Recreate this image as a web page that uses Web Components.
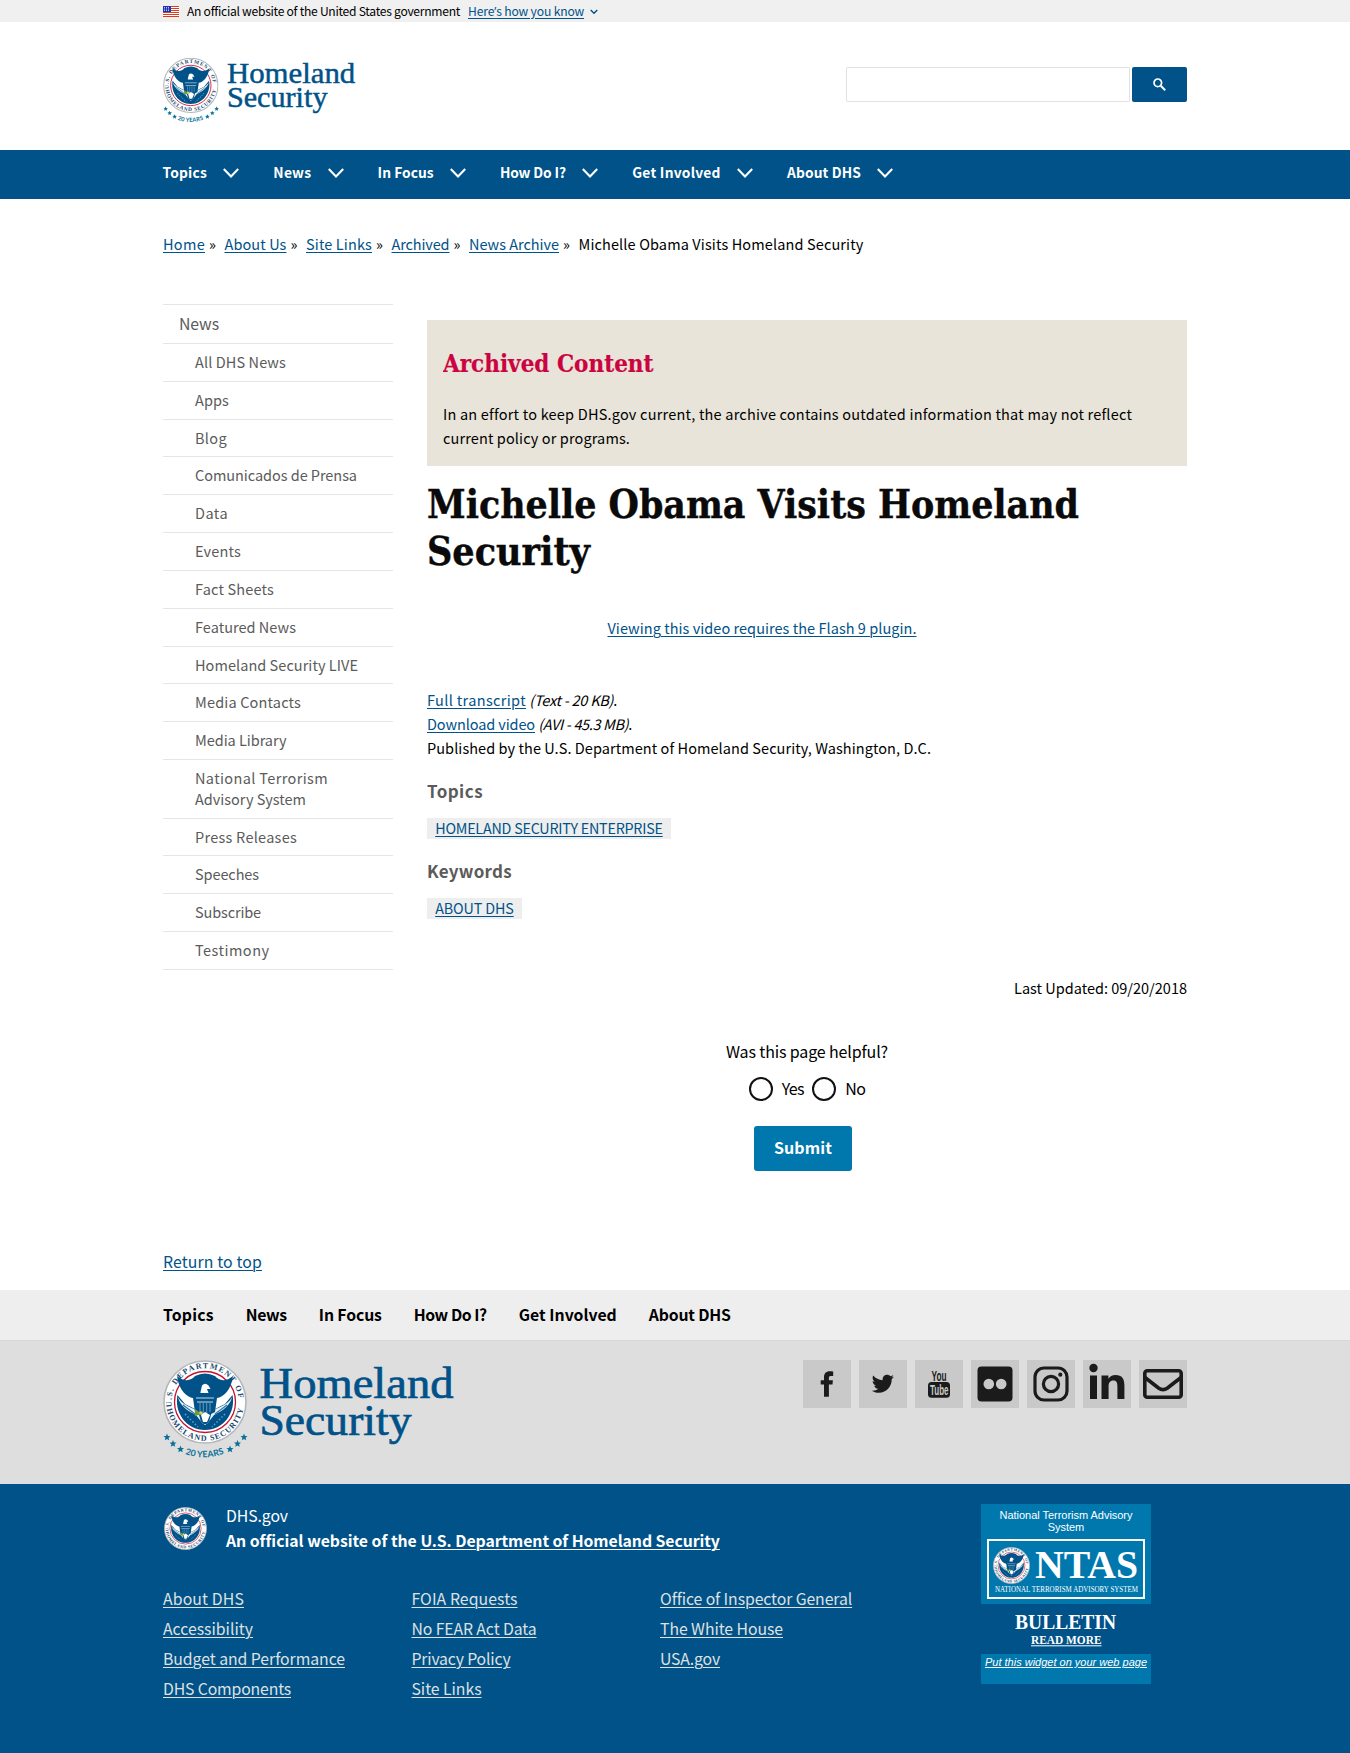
<!DOCTYPE html>
<html lang="en">
<head>
<meta charset="utf-8">
<title>Michelle Obama Visits Homeland Security | Homeland Security</title>
<style>
html,body{margin:0;padding:0;background:#fff}
body{font-family:"Noto Sans CJK SC","Open Sans",sans-serif;font-size:14.5px;line-height:24px;color:#000}
</style>
</head>
<body>
<dhs-page></dhs-page>
<script>
const define = (name, html, extra) => {
  const t = document.createElement('template');
  t.innerHTML = '<style>*{box-sizing:border-box}a{color:#005288;text-decoration:underline;text-underline-offset:2px;text-decoration-thickness:1px}svg{display:block}</style>' + html;
  customElements.define(name, class extends HTMLElement {
    connectedCallback() {
      if (this.shadowRoot) return;
      this.attachShadow({mode: 'open'}).appendChild(t.content.cloneNode(true));
      if (extra) extra.call(this, this.shadowRoot);
    }
  });
};

/* Inline run of text, tracked so that it fills the measure given in "w". */
customElements.define('text-run', class extends HTMLElement {
  connectedCallback() {
    if (this.shadowRoot) return;
    this.attachShadow({mode: 'open'}).innerHTML = '<style>:host{display:inline;white-space:nowrap}</style><slot></slot>';
    const w = parseFloat(this.getAttribute('w'));
    const now = this.getBoundingClientRect().width;
    if (w && now) this.style.letterSpacing = ((w - now) / this.textContent.length).toFixed(3) + 'px';
  }
});

define('dhs-seal', `
<style>:host{display:block}svg{width:100%;height:100%;overflow:visible}</style>
<svg viewBox="-42 -42 84 84">
 <defs>
  <path id="top" d="M-33.2 5 A33.6 33.6 0 1 1 33.2 5"/>
  <path id="bot" d="M-38.6 4 A38.8 38.8 0 0 0 38.6 4"/>
 </defs>
 <circle r="41" fill="#fff" stroke="#b4b7ba" stroke-width="1.6"/>
 <circle r="30.5" fill="#fff" stroke="#c41230" stroke-width="1.3"/>
 <path d="M-27.5 -7 C-31 10 -19 28 0 28 C19 28 31 10 27.5 -7 L20 2 L0 12 L-20 2Z" fill="#005288"/>
 <path d="M-27 -5 C-23 3 -14 5 -7 9 L-4 20 L0 23 L4 20 L7 9 C14 5 23 3 27 -5 C26 2 18 9 9 13 L2 22 H-2 L-9 13 C-18 9 -26 2 -27 -5Z" fill="#e9f1f6"/>
 <path d="M-22 3 L-10 12 M22 3 L10 12" stroke="#2e7aa8" stroke-width="1.2"/>
 <path d="M-28 -26 C-21 -20 -14 -21 -10 -26 Q0 -31 10 -26 C14 -21 21 -20 28 -26 C26 -11 18 -5 12 -4 L10 10 L0 15 L-10 10 L-12 -4 C-18 -5 -26 -11 -28 -26Z" fill="#005288"/>
 <path d="M-4.500 -10 L-3 -16.500 Q0 -20 3.500 -16.500 L5.500 -13 L2 -13 L3.500 -9 H-4.500Z" fill="#fff"/>
 <path d="M-9 -4 H9 M-8 0 H8" stroke="#dbe8f0" stroke-width=".9"/>
 <path d="M-5 1 V10 M-1.7 1 V12 M1.7 1 V12 M5 1 V10" stroke="#7fabc8" stroke-width=".8"/>
 <path d="M-10 7 L-3 12 L-10 14Z" fill="#6f9d3c"/><circle cx="-4" cy="11" r="1.8" fill="#d8cf62"/>
 <path d="M-4 13 L0 10 L5 13 L2 20 H-2Z" fill="#fff"/>
 <path d="M-20 12 L-7 25 M20 12 L7 25" stroke="#58a1c7" stroke-width="1.6" stroke-dasharray="1.5 2"/>
 <g font-family="Liberation Serif,serif" font-weight="bold" font-size="8" fill="#20496f">
  <text><textPath href="#top" textLength="107">U.S. DEPARTMENT OF</textPath></text>
  <text><textPath href="#bot" startOffset="3" textLength="108">HOMELAND SECURITY</textPath></text>
 </g>
</svg>`);

define('dhs-logo', `
<style>:host{display:block;width:292px;height:102px}svg{width:100%;height:100%;overflow:visible}</style>
<svg viewBox="0 0 292 102">
 <foreignObject x="0" y="1" width="84" height="84"><dhs-seal style="width:84px;height:84px"></dhs-seal></foreignObject>
 <g fill="#0a7198"><path id="s" d="M4 74.6l1 2.3 2.5.2-1.9 1.6.6 2.5L4 79.9l-2.2 1.3.6-2.5L.5 77.1l2.5-.2z"/>
 <use href="#s" x="6" y="6.5"/><use href="#s" x="13.5" y="12"/><use href="#s" x="63" y="12"/><use href="#s" x="70.5" y="6.5"/><use href="#s" x="77" y="0"/></g>
 <path id="yr" d="M21 94.5 Q41.5 102.5 64 93.5" fill="none"/>
 <text font-family="Lato,sans-serif" font-weight="bold" font-size="8.8" fill="#0a7198"><textPath href="#yr" startOffset="1" textLength="40">20 YEARS</textPath></text>
 <g font-family="Liberation Serif,serif" font-size="44" fill="#005288" stroke="#005288" stroke-width=".7">
  <text x="96.5" y="38.8" textLength="194" lengthAdjust="spacingAndGlyphs">Homeland</text>
  <text x="96.5" y="75.500" textLength="152" lengthAdjust="spacingAndGlyphs">Security</text>
 </g>
</svg>`);

define('gov-banner', `
<style>:host{display:flex;align-items:center;height:22px;background:#f0f0f0;padding-left:163px;font-size:12.1px;line-height:22px}
.flag{margin-right:8px}.a{margin-right:8px}.c{margin:1px 0 0 6px}</style>
<svg class="flag" width="16" height="11" viewBox="0 0 16 11"><rect width="16" height="11" fill="#fff"/><path d="M0 .5H16M0 2.5H16M0 4.5H16M0 6.5H16M0 8.5H16M0 10.5H16" stroke="#db3e1f"/><rect width="8" height="6" fill="#1e33b1"/><path d="M1 1.5h6M1 3h6M1 4.5h6" stroke="#fff" stroke-width=".7" stroke-dasharray="1 1"/></svg>
<span class="a"><text-run w="273">An official website of the United States government</text-run></span>
<a href="#"><text-run w="116">Here<span style="font-family:'Open Sans',sans-serif">’</span>s how you know</text-run></a>
<svg class="c" width="8" height="6" viewBox="0 0 8 6"><path d="M.7 1L4 4.3 7.3 1" fill="none" stroke="#005288" stroke-width="1.4"/></svg>`);

define('site-header', `
<style>:host{display:flex;justify-content:space-between;height:128px;padding:35px 163px 0}
dhs-logo{width:193.3px;height:67.5px}.s{display:flex;gap:2px;margin-top:10px;height:35px}
.i{width:284px;border:1px solid #e2e2e2;border-radius:1px}.b{width:55px;background:#005288;border-radius:2px;display:flex;align-items:center;justify-content:center}</style>
<dhs-logo></dhs-logo>
<div class="s"><div class="i"></div><div class="b"><svg width="13" height="13" viewBox="0 0 13 13" fill="none" stroke="#fff"><circle cx="4.8" cy="4.8" r="3.8" stroke-width="1.7"/><path d="M7.7 7.7L12.2 12.2" stroke-width="2"/></svg></div></div>`);

define('nav-item', `
<style>:host{display:flex;align-items:center}svg{margin:2px 0 0 16.300px}</style>
<slot></slot><svg width="16" height="10" viewBox="0 0 16 10"><path d="M.8 1L8 8.5 15.2 1" fill="none" stroke="#fff" stroke-width="2.1"/></svg>`);

define('main-nav', `
<style>:host{display:flex;gap:34px;height:49px;background:#005288;color:#fff;font-weight:bold;font-size:13.8px;padding:0 162.5px 5px}</style>
<nav-item><text-run w="44.5">Topics</text-run></nav-item><nav-item><text-run w="38">News</text-run></nav-item><nav-item><text-run w="56">In Focus</text-run></nav-item><nav-item><text-run w="66">How Do I?</text-run></nav-item><nav-item><text-run w="88.5">Get Involved</text-run></nav-item><nav-item><text-run w="74">About DHS</text-run></nav-item>`);

define('bread-crumbs', `
<style>:host{display:flex;height:24px;gap:8.5px}span{display:flex;gap:4px}</style>
<span><a href="#"><text-run w="42">Home</text-run></a><text-run w="7">»</text-run></span><span><a href="#"><text-run w="62">About Us</text-run></a><text-run w="7">»</text-run></span><span><a href="#"><text-run w="66">Site Links</text-run></a><text-run w="7">»</text-run></span><span><a href="#"><text-run w="58">Archived</text-run></a><text-run w="7">»</text-run></span><span><a href="#"><text-run w="90">News Archive</text-run></a><text-run w="7">»</text-run></span><text-run w="285">Michelle Obama Visits Homeland Security</text-run>`);

define('side-nav', `
<style>:host{display:block;width:230px;border-top:1px solid #e6e6e6;color:#5b5b5b;line-height:20.8px}
div{border-bottom:1px solid #e6e6e6;padding:8px 0 8.03px 32px}.t{padding:8px 16px;line-height:22px;font-size:15.8px}</style>
<div class="t"><text-run w="40">News</text-run></div>`,
function (root) {
  [['All DHS News|91'],['Apps|34'],['Blog|32'],['Comunicados de Prensa|162'],['Data|33'],['Events|46'],['Fact Sheets|79'],['Featured News|101'],['Homeland Security LIVE|163'],['Media Contacts|106'],['Media Library|91.5'],['National Terrorism|133','Advisory System|111'],['Press Releases|102'],['Speeches|64'],['Subscribe|66'],['Testimony|74.5']].forEach(lines => {
    const d = document.createElement('div');
    d.innerHTML = lines.map(l => { const [t, w] = l.split('|'); return `<text-run w="${w}">${t}</text-run>`; }).join('<br>');
    root.appendChild(d);
  });
});

define('archive-notice', `
<style>:host{display:block;background:#e9e4d9;padding:0 16px;height:145.5px;padding-top:16px}h2{margin:0;height:66px}</style>
<h2><svg width="728" height="66"><text x="0" y="36" textLength="210.5" lengthAdjust="spacingAndGlyphs" font-family="DejaVu Serif Condensed,DejaVu Serif,serif" font-weight="bold" font-size="24.2" fill="#cb0340" stroke="#cb0340" stroke-width=".2">Archived Content</text></svg></h2>
<text-run w="689">In an effort to keep DHS.gov current, the archive contains outdated information that may not reflect</text-run><br><text-run w="187">current policy or programs.</text-run>`);

define('tag-group', `
<style>:host{display:flex;flex-direction:column;align-items:flex-start;margin-top:19px}h3{margin:0 0 14.5px;font-size:17px;line-height:24px;color:#5b5b5b}
div{display:flex;background:#eee;height:21.5px;line-height:20.5px;padding:0 8.2px;font-size:14.3px}</style>
<h3><slot name="h"></slot></h3><div><a href="#"><slot></slot></a></div>`);

define('page-feedback', `
<style>:host{display:flex;flex-direction:column;align-items:center;font-size:16px;margin-top:39px}
.r{display:flex;align-items:center;margin-top:14px;height:24px;line-height:22px}.r text-run{margin-top:-2px}i{width:24px;height:24px;border:2px solid #111;border-radius:50%;margin-right:9px}i+text-run+i{margin-left:8.5px}
.b{width:98px;height:45px;background:#0078ae;color:#fff;border-radius:3px;font-weight:bold;text-align:center;line-height:43px;margin:25px 8px 0 0}</style>
<text-run w="162">Was this page helpful?</text-run>
<div class="r"><i></i><text-run w="22">Yes</text-run><i></i><text-run w="20">No</text-run></div>
<div class="b"><text-run w="58">Submit</text-run></div>`);

define('article-body', `
<style>:host{display:block;width:760px;padding-top:16px}h1{margin:0;height:130px}.v{width:670px;text-align:center;margin-top:20.5px}.d{margin-top:48px}.u{text-align:right;margin-top:56.500px}tag-group+tag-group{margin-top:20px}</style>
<archive-notice></archive-notice>
<h1><svg width="760" height="130" font-family="DejaVu Serif Condensed,DejaVu Serif,serif" font-weight="bold" font-size="40" fill="#0a0a0a" stroke="#0a0a0a" stroke-width=".4"><text x="0" y="52" textLength="652" lengthAdjust="spacingAndGlyphs">Michelle Obama Visits Homeland</text><text x="0" y="98.7" textLength="163" lengthAdjust="spacingAndGlyphs">Security</text></svg></h1>
<div class="v"><a href="#"><text-run w="309">Viewing this video requires the Flash 9 plugin.</text-run></a></div>
<div class="d"><a href="#"><text-run w="99">Full transcript</text-run></a> <i><text-run w="84">(Text - 20 KB)</text-run></i>.<br><a href="#"><text-run w="108">Download video</text-run></a> <i><text-run w="90">(AVI - 45.3 MB)</text-run></i>.<br><text-run w="504">Published by the U.S. Department of Homeland Security, Washington, D.C.</text-run></div>
<tag-group><text-run slot="h" w="56">Topics</text-run><text-run w="227.5">HOMELAND SECURITY ENTERPRISE</text-run></tag-group>
<tag-group><text-run slot="h" w="85">Keywords</text-run><text-run w="78.5">ABOUT DHS</text-run></tag-group>
<div class="u"><text-run w="173">Last Updated: 09/20/2018</text-run></div>
<page-feedback></page-feedback>`);

define('footer-nav', `
<style>:host{display:flex;gap:32px;height:50px;background:#eee;padding:0 163px;align-items:center;font-weight:bold;font-size:15.8px}</style>
<text-run w="50.800">Topics</text-run><text-run w="41">News</text-run><text-run w="63">In Focus</text-run><text-run w="73">How Do I?</text-run><text-run w="98">Get Involved</text-run><text-run w="82">About DHS</text-run>`);

define('social-links', `
<style>:host{display:flex;gap:8px;height:48px}svg{width:48px;height:48px;background:#c9c9c9}</style>
<svg viewBox="0 0 48 48"><path fill="#1b1b1b" d="M30.2 11.5v4.4h-2.400c-1.600 0-1.900.8-1.900 1.900v2.400h4l-.4 4.400h-3.600v12.100h-4.900V24.600h-3.300v-4.400H21v-3c0-3.600 2-5.900 5.800-5.900 1.700 0 3 .1 3.400.2z"/></svg>
<svg viewBox="0 0 48 48"><path fill="#1b1b1b" transform="translate(12.7 12.6) scale(.0435)" d="M459.370 151.716c.325 4.548.325 9.097.325 13.645 0 138.720-105.583 298.558-298.558 298.558-59.452 0-114.680-17.219-161.137-47.106 8.447.974 16.568 1.299 25.340 1.299 49.055 0 94.213-16.568 130.274-44.832-46.132-.975-84.792-31.188-98.112-72.772 6.498.974 12.995 1.624 19.818 1.624 9.421 0 18.843-1.300 27.614-3.573-48.081-9.747-84.143-51.980-84.143-102.985v-1.299c13.969 7.797 30.214 12.670 47.431 13.319-28.264-18.843-46.781-51.005-46.781-87.391 0-19.492 5.197-37.360 14.294-52.954 51.655 63.675 129.300 105.258 216.365 109.807-1.624-7.797-2.599-15.918-2.599-24.040 0-57.828 46.782-104.934 104.934-104.934 30.213 0 57.502 12.670 76.670 33.137 23.715-4.548 46.456-13.320 66.599-25.340-7.798 24.366-24.366 44.833-46.132 57.827 21.117-2.273 41.584-8.122 60.426-16.243-14.292 20.791-32.161 39.308-52.628 54.253z"/></svg>
<svg viewBox="0 0 48 48" font-family="Liberation Sans Narrow,Liberation Sans,sans-serif" font-weight="bold"><text x="16.5" y="20.5" font-size="14" textLength="15" lengthAdjust="spacingAndGlyphs" fill="#1b1b1b">You</text><rect x="13" y="22" width="22" height="15.8" rx="3.5" fill="#1b1b1b"/><text x="15" y="35" font-size="14" textLength="18.5" lengthAdjust="spacingAndGlyphs" fill="#c9c9c9">Tube</text></svg>
<svg viewBox="0 0 48 48"><rect x="6.5" y="6.5" width="35" height="35" rx="4" fill="#1b1b1b"/><circle cx="17.8" cy="24" r="5.3" fill="#c9c9c9"/><circle cx="30.2" cy="24" r="5.3" fill="#c9c9c9"/></svg>
<svg viewBox="0 0 48 48" fill="none" stroke="#1b1b1b" stroke-width="3.2"><rect x="8" y="8" width="32" height="32" rx="9"/><circle cx="24" cy="24" r="7.6"/><circle cx="33.3" cy="14.7" r="2.1" fill="#1b1b1b" stroke="none"/></svg>
<svg viewBox="0 0 48 48" fill="#1b1b1b"><circle cx="10.5" cy="8" r="4.2"/><path d="M7 15.5h7V39H7zM18.5 15.5h6.9v3.2c1.5-2.4 3.8-3.8 7.1-3.8 6.7 0 8.9 4 8.9 10.4V39h-7V26.5c0-3.2-.6-5.9-3.9-5.9-3.7 0-4.9 2.6-4.9 6V39h-7.100z"/></svg>
<svg viewBox="0 0 48 48" fill="none" stroke="#1b1b1b" stroke-width="3.6"><rect x="5.8" y="10.8" width="36.4" height="26.4" rx="2.5"/><path d="M6 17.5L19.5 28q4.5 3.2 9 0L42 17.5"/></svg>`);

define('brand-bar', `
<style>:host{display:flex;justify-content:space-between;height:144px;background:#dedede;padding:18px 163px 0;border-top:1px solid #d8d8d8}social-links{margin-top:1px}</style>
<dhs-logo></dhs-logo><social-links></social-links>`);

define('ntas-widget', `
<style>:host{display:flex;flex-direction:column;width:170px;height:180px;font-family:"Liberation Sans",sans-serif;color:#fff;text-align:center;font-size:11px;line-height:12px}
.a{height:100px;background:#0078ae;padding:5px 6px 0}.n{border:2px solid #fff;height:60px;margin-top:6px;padding:6px 4px 0;display:flex;gap:4px;align-items:flex-start}
dhs-seal{width:37px;height:37px}.b{height:50px;background:#005288}.c{height:30px;background:#0078ae;font-style:italic;font-size:11px;padding-top:2px}.c a{color:#fff;text-underline-offset:1px}svg{overflow:visible}</style>
<div class="a"><text-run w="133">National Terrorism Advisory</text-run><br><text-run w="36.5">System</text-run>
<div class="n"><dhs-seal></dhs-seal><svg width="104" height="37" fill="#fff" font-family="Liberation Serif,serif"><text x="1" y="30.500" font-size="40" font-weight="bold" textLength="103" lengthAdjust="spacingAndGlyphs">NTAS</text><text x="-39" y="44.5" font-size="7.5" textLength="143" lengthAdjust="spacingAndGlyphs">NATIONAL TERRORISM ADVISORY SYSTEM</text></svg></div></div>
<div class="b"><svg width="170" height="50" fill="#fff" font-family="Liberation Serif,serif" font-weight="bold"><text x="34" y="25" font-size="22" textLength="101" lengthAdjust="spacingAndGlyphs">BULLETIN</text><text x="50" y="40.300" font-size="13.300" textLength="70.5" lengthAdjust="spacingAndGlyphs">READ MORE</text><path d="M50 41.8H120.5" stroke="#fff"/></svg></div>
<div class="c"><a href="#"><text-run w="162">Put this widget on your web page</text-run></a></div>`);

define('site-identifier', `
<style>:host{display:flex;justify-content:space-between;height:269px;background:#005288;color:#fff;font-size:15.8px;padding:20px 199px 0 163px}
a{color:inherit}.id{display:flex}.id dhs-seal{width:43px;height:43px;margin:3px 19px 0 1px}.id div{line-height:25px;margin-top:-1px}
.cols{display:grid;grid-template-columns:248.5px 248.5px 200px;line-height:30px;margin-top:31px;color:#dfe1e2}.cols div{display:flex;flex-direction:column;align-items:flex-start}b{white-space:nowrap}</style>
<div><div class="id"><dhs-seal></dhs-seal><div><text-run w="62">DHS.gov</text-run><br><b><text-run w="190.5">An official website of the</text-run> <a href="#"><text-run w="299.5">U.S. Department of Homeland Security</text-run></a></b></div></div>
<div class="cols"><div><a href="#"><text-run w="81">About DHS</text-run></a><a href="#"><text-run w="90">Accessibility</text-run></a><a href="#"><text-run w="182">Budget and Performance</text-run></a><a href="#"><text-run w="128">DHS Components</text-run></a></div>
<div><a href="#"><text-run w="106">FOIA Requests</text-run></a><a href="#"><text-run w="125">No FEAR Act Data</text-run></a><a href="#"><text-run w="99">Privacy Policy</text-run></a><a href="#"><text-run w="70">Site Links</text-run></a></div>
<div><a href="#"><text-run w="192">Office of Inspector General</text-run></a><a href="#"><text-run w="123">The White House</text-run></a><a href="#"><text-run w="60">USA.gov</text-run></a></div></div></div>
<ntas-widget></ntas-widget>`);

define('dhs-page', `
<style>:host{display:block;width:1350px}main{display:block;height:1091px;padding:33px 163px 0}.row{display:flex;gap:34px;align-items:flex-start;margin-top:48px;height:946px}.top{font-size:15.8px;display:inline-block}</style>
<gov-banner></gov-banner><site-header></site-header><main-nav></main-nav>
<main><bread-crumbs></bread-crumbs><div class="row"><side-nav></side-nav><article-body></article-body></div>
<a class="top" href="#"><text-run w="99">Return to top</text-run></a></main>
<footer-nav></footer-nav><brand-bar></brand-bar><site-identifier></site-identifier>`);
</script>
</body>
</html>
